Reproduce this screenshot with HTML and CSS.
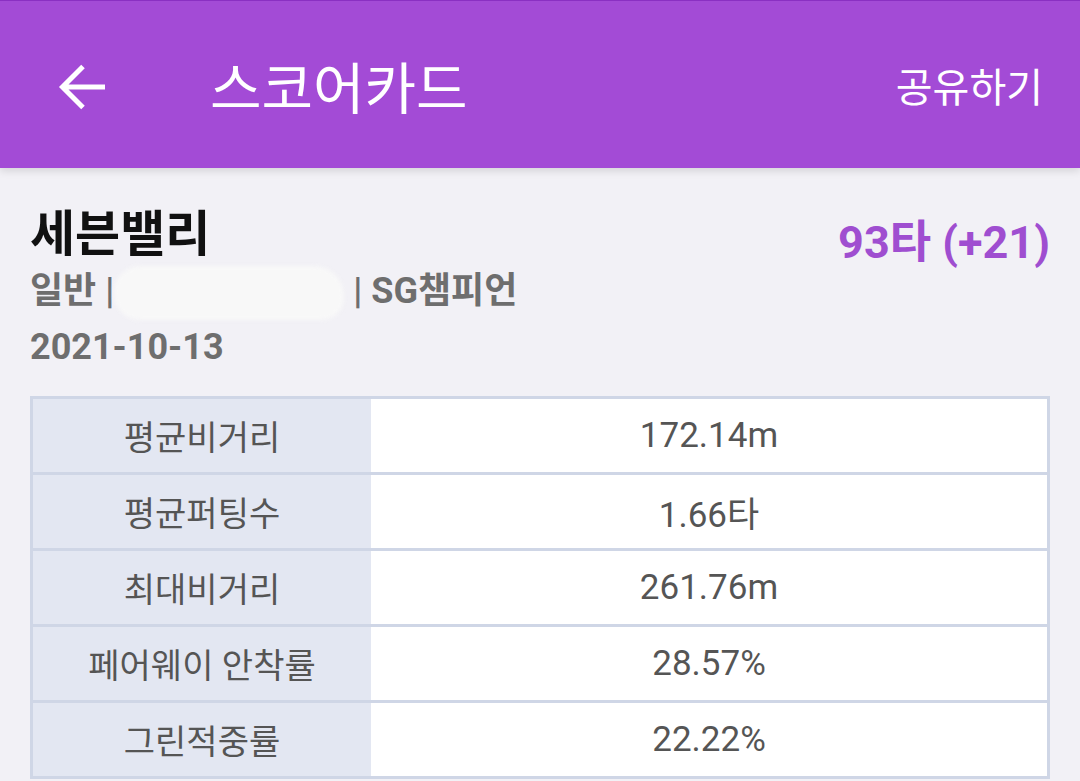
FILE: index.html
```html
<!DOCTYPE html>
<html lang="ko">
<head>
    <meta charset="UTF-8">
    <meta name="viewport" content="width=device-width, initial-scale=1.0">
    <title>스코어카드</title>
    <link rel="stylesheet" href="styles.css">
</head>
<body>

    <header class="app-bar">
        <button class="back-btn" aria-label="뒤로">
            <svg width="48" height="48" viewBox="0 0 48 48">
                <path d="M47 24H5 M25 3.5 L4.5 24 L25 44.5" fill="none" stroke="#fff" stroke-width="5"/>
            </svg>
        </button>
        <h1 class="title">스코어카드</h1>
        <div class="share">공유하기</div>
    </header>

    <main class="content">
        <div class="round-head">
            <div class="round-info">
                <h2 class="course">세븐밸리</h2>
                <div class="meta">일반 |<span class="hidden-name"></span> | SG챔피언</div>
                <div class="meta">2021-10-13</div>
            </div>
            <div class="score">93타 (+21)</div>
        </div>

        <div class="stats">
            <div class="row">
                <div class="label">평균비거리</div>
                <div class="value">172.14m</div>
            </div>
            <div class="row">
                <div class="label">평균퍼팅수</div>
                <div class="value">1.66타</div>
            </div>
            <div class="row">
                <div class="label">최대비거리</div>
                <div class="value">261.76m</div>
            </div>
            <div class="row">
                <div class="label">페어웨이 안착률</div>
                <div class="value">28.57%</div>
            </div>
            <div class="row">
                <div class="label">그린적중률</div>
                <div class="value">22.22%</div>
            </div>
        </div>
    </main>

</body>
</html>
```

FILE: styles.css
```css
body {
    margin: 0;
    font-family: Roboto, "Noto Sans CJK KR", sans-serif;
    background-color: #f2f1f6;
    color: #333;
    height: 781px;
    overflow: hidden;
}

.app-bar {
    display: flex;
    align-items: center;
    height: 167px;
    padding: 0 37px 0 58px;
    background-color: #a34bd6;
    border-top: 1px solid #8a30c2;
    box-shadow: 0 3px 8px rgba(0, 0, 0, 0.12);
    color: white;
}

.back-btn {
    display: flex;
    padding: 0;
    margin-top: 4px;
    border: none;
    background: none;
    cursor: pointer;
}

.title {
    margin: 0 0 0 104px;
    font-size: 56px;
    font-weight: 400;
    letter-spacing: 0;
}

.share {
    margin-left: auto;
    font-size: 40px;
}

.content {
    padding: 38px 30px 0 30px;
}

.round-head {
    display: flex;
    justify-content: space-between;
    align-items: flex-start;
}

.course {
    margin: 0;
    font-size: 49px;
    font-weight: 700;
    color: #111;
    line-height: 58px;
}

.meta {
    font-size: 36px;
    font-weight: 700;
    color: #6e6e6e;
    line-height: 54px;
}

.hidden-name {
    display: inline-block;
    width: 230px;
    height: 54px;
    vertical-align: middle;
    background-color: #f8f8f8;
    border-radius: 26px 30px 22px 26px;
    filter: blur(2px);
}

.score {
    font-size: 45px;
    font-weight: 700;
    color: #9f4ed0;
}

.stats {
    margin-top: 22px;
    border: 3px solid #cfd6e6;
    border-bottom: none;
    background-color: white;
}

.row {
    display: flex;
    height: 73px;
    border-bottom: 3px solid #cfd6e6;
}

.label, .value {
    display: flex;
    align-items: center;
    justify-content: center;
    color: #555;
}

.label {
    width: 338px;
    font-size: 34px;
    background-color: #e3e7f2;
}

.value {
    flex: 1;
    font-size: 35px;
}
```
